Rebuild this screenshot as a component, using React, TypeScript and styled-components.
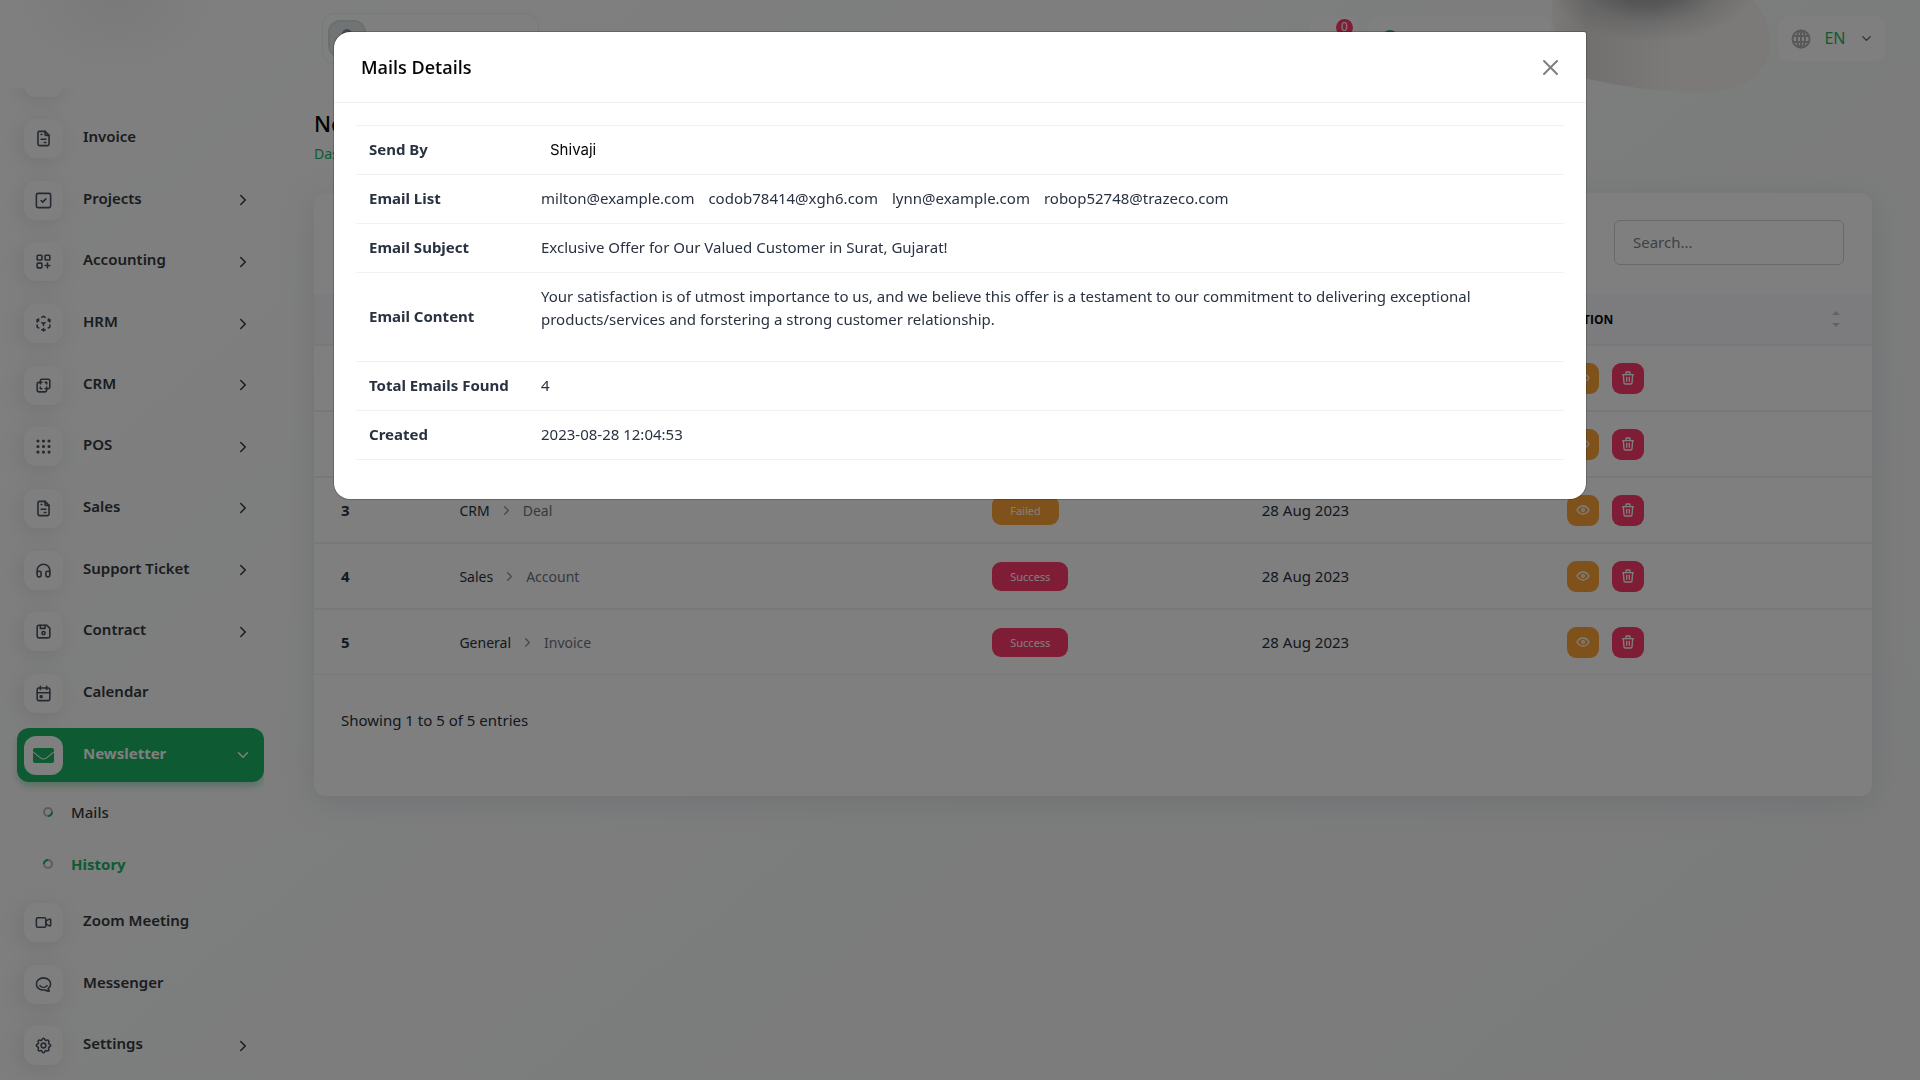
import React from 'react';
import styled, { createGlobalStyle } from 'styled-components';
import {
  TbFileInvoice, TbSquareCheck, TbLayoutGridAdd, TbCube3dSphere, TbLayersDifference, TbGridDots,
  TbHeadphones, TbDeviceFloppy, TbCalendarEvent, TbVideo, TbBrandHipchat, TbSettings, TbTrash, TbEye,
} from 'react-icons/tb';
import { FiChevronRight, FiChevronDown } from 'react-icons/fi';

const green = '#1cb466';

const GlobalStyle = createGlobalStyle`
  *, *::before, *::after { box-sizing: border-box; }
  html, body, #root { height: 100%; }
  body {
    margin: 0;
    font: 400 15px/23px "Noto Sans", "Open Sans", sans-serif;
    color: #293240;
    background: linear-gradient(140deg, #ffffff 3%, #f7faf8 60%, #f5f6f5 100%);
    overflow: hidden;
  }
  a { color: inherit; text-decoration: none; }
  button { font: inherit; border: 0; padding: 0; cursor: pointer; }
`;

const Shell = styled.div`
  display: grid;
  grid-template-columns: 264px minmax(0, 1fr);
  min-height: 100%;
`;

const Sidebar = styled.aside`
  height: 100vh;
  display: flex;
  flex-direction: column;
`;

const Brand = styled.div`
  height: 88px;
  flex: none;
  margin: 0 24px 0 14px;
  border-radius: 24px;
  background: radial-gradient(ellipse at 45% 0%, #f4f4f5, rgba(255, 255, 255, 0) 60%);
`;

const NavClip = styled.nav`
  flex: 1;
  min-height: 0;
  overflow: hidden;
  padding: 0 0 7px 17px;
`;

const NavList = styled.ul`
  list-style: none;
  margin: -38px 0 0;
  padding: 0;
  height: calc(100% + 38px);
  width: 247px;
  display: flex;
  flex-direction: column;
  justify-content: space-between;
`;

const NavLink = styled.a<{ $active?: boolean }>`
  display: grid;
  grid-template-columns: 39px 1fr 18px;
  column-gap: 20px;
  align-items: center;
  height: 54px;
  padding: 0 12px 0 7px;
  border-radius: 12px;
  font-weight: ${p => (p.$active ? 700 : 600)};
  color: ${p => (p.$active ? '#ffffff' : '#333840')};
  background: ${p => (p.$active ? green : 'transparent')};
  box-shadow: ${p => (p.$active ? '0 5px 7px -1px rgba(28, 180, 102, 0.35)' : 'none')};
  svg { display: block; }
`;

const IconTile = styled.span<{ $active?: boolean }>`
  width: 39px;
  height: 39px;
  border-radius: 12px;
  background: #ffffff;
  color: ${p => (p.$active ? green : '#4a5260')};
  display: grid;
  place-items: center;
  box-shadow: ${p => (p.$active ? 'none' : '-3px 4px 23px rgba(0, 0, 0, 0.1)')};
`;

const NavLabel = styled.span`
  padding-bottom: 4px;
  white-space: nowrap;
`;

const SubList = styled.ul`
  list-style: none;
  margin: 0 0 -2px;
  padding: 4px 0 0 26px;
`;

const SubLink = styled.a<{ $active?: boolean }>`
  display: flex;
  align-items: center;
  gap: 18px;
  height: 52px;
  color: ${p => (p.$active ? green : '#333840')};
  font-weight: ${p => (p.$active ? 700 : 500)};
`;

const Main = styled.div`
  padding: 0 48px 0 50px;
`;

const TopBar = styled.header`
  position: relative;
  height: 92px;
  margin-right: -14px;
  padding: 16px 0 0 8px;
  display: flex;
  align-items: flex-start;
`;

const Chip = styled.button<{ $w: number }>`
  width: ${p => p.$w}px;
  height: 45px;
  border-radius: 12px;
  background: #ffffff;
  color: #525b69;
  display: flex;
  align-items: center;
  padding: 0 13px;
`;

const Profile = styled(Chip)`
  height: 51px;
  margin-top: -3px;
  border: 1px solid #f1f1f1;
  background: transparent;
  padding: 0 5px;
`;

const Avatar = styled.span`
  width: 38px;
  height: 38px;
  border-radius: 12px;
  border: 2px solid #cfe5dc;
  background: #e3e6ea;
  display: grid;
  place-items: center;
`;

const BellChip = styled(Chip)`
  position: relative;
  margin: 0 10px 0 auto;
`;

const Count = styled.span`
  position: absolute;
  top: 3px;
  right: 4px;
  width: 17px;
  height: 17px;
  border-radius: 9px;
  background: #ff3a6e;
  color: #ffffff;
  font-size: 12px;
  line-height: 15px;
  text-align: center;
`;

const ProfileMenu = styled(Chip)`
  margin-right: 227px;
  color: ${green};
`;

const Shade = styled.svg`
  position: absolute;
  top: 0;
  right: 116px;
`;

const LangChip = styled(Chip)`
  justify-content: space-between;
  padding: 0 12px 0 13px;
`;

const LangCode = styled.span`
  font-size: 16px;
  color: ${green};
`;

const PageTitle = styled.h1`
  margin: 0;
  padding-top: 15px;
  font-size: 22px;
  line-height: 32px;
  font-weight: 500;
  color: #060606;
`;

const Crumbs = styled.nav`
  margin-top: 4px;
  font-size: 14px;
  line-height: 22px;
  color: ${green};
`;

const Card = styled.section`
  margin-top: 28px;
  border-radius: 12px;
  background: #ffffff;
  box-shadow: 0 6px 30px rgba(182, 186, 203, 0.35);
  overflow: hidden;
`;

const CardTop = styled.div`
  padding: 27px 28px 29px;
  display: flex;
  justify-content: flex-end;
`;

const Search = styled.input`
  width: 230px;
  height: 45px;
  border: 1px solid #ced4da;
  border-radius: 6px;
  padding: 0 18px 2px;
  font: inherit;
  background: #ffffff;
  &::placeholder { color: #7c848d; opacity: 1; }
`;

const Entries = styled.table`
  width: 100%;
  table-layout: fixed;
  border-collapse: separate;
  border-spacing: 0;
  th, td { text-align: left; padding: 0 26px 0 27px; }
  thead th {
    height: 52px;
    background: #f8f9fd;
    border-bottom: 2px solid #f1f1f1;
    font-family: "Open Sans", sans-serif;
    font-size: 12px;
    font-weight: 700;
    color: #060606;
  }
  tbody th, tbody td { height: 66px; border-bottom: 2px solid #f1f1f1; }
  tbody tr:last-child > * { height: 65px; border-bottom-width: 1px; }
`;

const Column = styled.col<{ $share: number }>`
  width: ${p => p.$share}%;
`;

const SortHead = styled.span`
  display: flex;
  align-items: center;
  justify-content: space-between;
  padding-right: 6px;
`;

const Path = styled.span`
  display: flex;
  align-items: center;
  gap: 9px;
  font-size: 14px;
`;

const Leaf = styled.span`
  color: #6c757d;
`;

const Badge = styled.span<{ $tone: string }>`
  display: inline-block;
  padding: 0 18px;
  border-radius: 9px;
  background: ${p => p.$tone};
  color: #ffffff;
  font-size: 11px;
  line-height: 29px;
  vertical-align: middle;
`;

const Actions = styled.div`
  display: flex;
  gap: 13px;
`;

const ActionButton = styled.button<{ $tone: string }>`
  width: 32px;
  height: 31px;
  border-radius: 9px;
  background: ${p => p.$tone};
  color: #ffffff;
  display: grid;
  place-items: center;
`;

const CardFoot = styled.p`
  margin: 0;
  padding: 34px 27px 64px;
`;

const Backdrop = styled.div`
  position: fixed;
  inset: 0;
  background: rgba(0, 0, 0, 0.5);
  padding: 32px 24px;
  overflow: auto;
`;

const Dialog = styled.div`
  max-width: 1252px;
  margin: 0 auto;
  border-radius: 16px 2px 16px 16px;
  background: #ffffff;
  box-shadow: 0 0 0 1px rgba(0, 0, 0, 0.2);
`;

const DialogHead = styled.div`
  display: flex;
  align-items: center;
  justify-content: space-between;
  height: 71px;
  padding: 0 27px;
  border-bottom: 1px solid #f1f1f1;
`;

const DialogTitle = styled.h2`
  margin: 0;
  font-family: "Open Sans", sans-serif;
  font-size: 18px;
  line-height: 26px;
  font-weight: 600;
  color: #060606;
`;

const CloseButton = styled.button`
  background: transparent;
  color: #7f7f7f;
  display: grid;
`;

const DialogBody = styled.div`
  padding: 22px 22px 39px;
`;

const Details = styled.table`
  width: 100%;
  border-collapse: separate;
  border-spacing: 0;
  border-top: 1px solid #f1f1f1;
  th, td {
    text-align: left;
    padding: 12px 13px 13px;
    border-bottom: 1px solid #f1f1f1;
  }
  th { width: 172px; font-weight: 700; white-space: nowrap; }
  p { margin: 0 0 17px; }
`;

const Sender = styled.span`
  padding-left: 9px;
  font-family: Inter, sans-serif;
  color: #060606;
`;

const Mailboxes = styled.span`
  display: flex;
  flex-wrap: wrap;
  column-gap: 14px;
`;

const EnvelopeIcon = () => (
  <svg width="21" height="15" viewBox="0 0 21 15" fill="currentColor" aria-hidden="true">
    <path d="M2 0h17a2 2 0 0 1 2 2v1.200l-7.800 6.200c-1.800 1.300-3.600 1.300-5.400 0L0 3.200V2a2 2 0 0 1 2-2z" />
    <path d="M0 4.400l7.200 5.800c2.200 1.600 4.400 1.600 6.600 0L21 4.400V13a2 2 0 0 1-2 2H2a2 2 0 0 1-2-2z" />
  </svg>
);

const RingIcon = ({ turned }: { turned?: boolean }) => (
  <svg width="10" height="10" viewBox="0 0 10 10" fill="none" strokeWidth="2" aria-hidden="true">
    <circle cx="5" cy="5" r="4" stroke="#b4b8c0" />
    <path d={turned ? 'M1 5A4 4 0 0 1 5 1' : 'M9 5A4 4 0 0 1 5 9'} stroke={green} />
  </svg>
);

const GlobeIcon = () => (
  <svg width="20" height="20" viewBox="0 0 20 20" fill="none" stroke="#b3b3b3" strokeWidth="2" aria-hidden="true">
    <circle cx="10" cy="10" r="8.5" />
    <ellipse cx="10" cy="10" rx="4" ry="8.5" />
    <path d="M10 1v18M2 7h16M2 13h16" />
  </svg>
);

const SortIcon = () => (
  <svg width="8" height="16" viewBox="0 0 8 16" fill="#c4c6ca" aria-hidden="true">
    <path d="M0 4L4 0l4 4zM0 12h8l-4 4z" />
  </svg>
);

const menu = [
  { label: 'Proposal', icon: TbFileInvoice },
  { label: 'Invoice', icon: TbFileInvoice },
  { label: 'Projects', icon: TbSquareCheck, more: true },
  { label: 'Accounting', icon: TbLayoutGridAdd, more: true },
  { label: 'HRM', icon: TbCube3dSphere, more: true },
  { label: 'CRM', icon: TbLayersDifference, more: true },
  { label: 'POS', icon: TbGridDots, more: true },
  { label: 'Sales', icon: TbFileInvoice, more: true },
  { label: 'Support Ticket', icon: TbHeadphones, more: true },
  { label: 'Contract', icon: TbDeviceFloppy, more: true },
  { label: 'Calendar', icon: TbCalendarEvent },
  { label: 'Newsletter', icon: EnvelopeIcon, active: true },
  { label: 'Zoom Meeting', icon: TbVideo },
  { label: 'Messenger', icon: TbBrandHipchat },
  { label: 'Settings', icon: TbSettings, more: true },
];

const columnShares = [7.6, 34.2, 17.3, 19.6, 21.3];

const entries = [
  { id: 1, module: 'CRM', leaf: 'Lead', ok: true },
  { id: 2, module: 'HRM', leaf: 'Employee', ok: true },
  { id: 3, module: 'CRM', leaf: 'Deal', ok: false },
  { id: 4, module: 'Sales', leaf: 'Account', ok: true },
  { id: 5, module: 'General', leaf: 'Invoice', ok: true },
];

const recipients = ['milton@example.com', 'codob78414@xgh6.com', 'lynn@example.com', 'robop52748@trazeco.com'];

export default function App() {
  return (
    <>
      <GlobalStyle />
      <Shell>
        <Sidebar>
          <Brand />
          <NavClip aria-label="Main">
            <NavList>
              {menu.map(({ label, icon: Icon, more, active }) => (
                <li key={label}>
                  <NavLink href="#" $active={active}>
                    <IconTile $active={active}><Icon size={19} /></IconTile>
                    <NavLabel>{label}</NavLabel>
                    {more && <FiChevronRight size={18} />}
                    {active && <FiChevronDown size={18} />}
                  </NavLink>
                  {active && (
                    <SubList>
                      <li><SubLink href="#"><RingIcon />Mails</SubLink></li>
                      <li><SubLink href="#" $active><RingIcon turned />History</SubLink></li>
                    </SubList>
                  )}
                </li>
              ))}
            </NavList>
          </NavClip>
        </Sidebar>

        <Main>
          <TopBar>
            <Profile $w={217} aria-label="Profile">
              <Avatar>
                <svg width="18" height="22" viewBox="0 0 18 22" fill="#8d99a8" aria-hidden="true">
                  <circle cx="9" cy="6" r="5" />
                  <path d="M0 22a9 9 0 0 1 18 0z" />
                </svg>
              </Avatar>
            </Profile>
            <BellChip $w={47} aria-label="Notifications"><Count>0</Count></BellChip>
            <ProfileMenu $w={184} aria-label="Workspace">
              <svg width="20" height="20" viewBox="0 0 20 20" fill="currentColor" aria-hidden="true">
                <circle cx="10" cy="10" r="9" />
              </svg>
            </ProfileMenu>
            <Shade width="219" height="92" viewBox="0 0 219 92" aria-hidden="true">
              <defs>
                <radialGradient id="shade" gradientUnits="userSpaceOnUse" cx="0" cy="0" r="1" gradientTransform="translate(100 -14) scale(105 56)">
                  <stop offset="0" stopColor="#9a9a9a" />
                  <stop offset="0.35" stopColor="#b4b3b3" />
                  <stop offset="0.65" stopColor="#dddbda" />
                  <stop offset="1" stopColor="#f6f4f2" />
                </radialGradient>
                <linearGradient id="fade" gradientUnits="userSpaceOnUse" x1="0" y1="0" x2="120" y2="0">
                  <stop offset="0" stopColor="#000000" stopOpacity="0" />
                  <stop offset="0.3" stopColor="#000000" stopOpacity="0.08" />
                  <stop offset="1" stopColor="#000000" stopOpacity="0" />
                </linearGradient>
              </defs>
              <path d="M2 0h200c12 14 18 30 17 44-1 28-24 48-62 48-50 0-90-6-120-13C12 68-4 22 2 0z" fill="url(#shade)" />
              <path d="M2 0h200c12 14 18 30 17 44-1 28-24 48-62 48-50 0-90-6-120-13C12 68-4 22 2 0z" fill="url(#fade)" />
            </Shade>
            <LangChip $w={108}>
              <GlobeIcon />
              <LangCode>EN</LangCode>
              <FiChevronDown size={15} />
            </LangChip>
          </TopBar>

          <PageTitle>Newsletter History</PageTitle>
          <Crumbs aria-label="Breadcrumb"><a href="#">Dashboard</a></Crumbs>

          <Card>
            <CardTop>
              <Search type="search" placeholder="Search..." aria-label="Search entries" />
            </CardTop>
            <Entries>
              <colgroup>
                {columnShares.map(share => <Column key={share} $share={share} />)}
              </colgroup>
              <thead>
                <tr>
                  <th>#</th>
                  <th>MODULE</th>
                  <th>STATUS</th>
                  <th>DATE</th>
                  <th><SortHead>ACTION<SortIcon /></SortHead></th>
                </tr>
              </thead>
              <tbody>
                {entries.map(e => (
                  <tr key={e.id}>
                    <th scope="row">{e.id}</th>
                    <td><Path>{e.module}<FiChevronRight size={15} color="#8b929a" /><Leaf>{e.leaf}</Leaf></Path></td>
                    <td><Badge $tone={e.ok ? '#ff3a6e' : '#ffa336'}>{e.ok ? 'Success' : 'Failed'}</Badge></td>
                    <td>28 Aug 2023</td>
                    <td>
                      <Actions>
                        <ActionButton $tone="#ffa336" aria-label="View"><TbEye size={16} /></ActionButton>
                        <ActionButton $tone="#ff3a6e" aria-label="Delete"><TbTrash size={16} /></ActionButton>
                      </Actions>
                    </td>
                  </tr>
                ))}
              </tbody>
            </Entries>
            <CardFoot>Showing 1 to 5 of 5 entries</CardFoot>
          </Card>
        </Main>
      </Shell>

      <Backdrop>
        <Dialog role="dialog" aria-modal="true" aria-labelledby="mail-title">
          <DialogHead>
            <DialogTitle id="mail-title">Mails Details</DialogTitle>
            <CloseButton aria-label="Close">
              <svg width="17" height="17" viewBox="0 0 17 17" stroke="currentColor" strokeWidth="2" strokeLinecap="round" aria-hidden="true">
                <path d="M2 2l13 13M15 2L2 15" />
              </svg>
            </CloseButton>
          </DialogHead>
          <DialogBody>
            <Details>
              <tbody>
                <tr><th scope="row">Send By</th><td><Sender>Shivaji</Sender></td></tr>
                <tr>
                  <th scope="row">Email List</th>
                  <td><Mailboxes>{recipients.map(r => <span key={r}>{r}</span>)}</Mailboxes></td>
                </tr>
                <tr><th scope="row">Email Subject</th><td>Exclusive Offer for Our Valued Customer in Surat, Gujarat!</td></tr>
                <tr>
                  <th scope="row">Email Content</th>
                  <td>
                    <p>
                      Your satisfaction is of utmost importance to us, and we believe this offer is a testament to our
                      commitment to delivering exceptional products/services and forstering a strong customer relationship.
                    </p>
                  </td>
                </tr>
                <tr><th scope="row">Total Emails Found</th><td>4</td></tr>
                <tr><th scope="row">Created</th><td>2023-08-28 12:04:53</td></tr>
              </tbody>
            </Details>
          </DialogBody>
        </Dialog>
      </Backdrop>
    </>
  );
}
